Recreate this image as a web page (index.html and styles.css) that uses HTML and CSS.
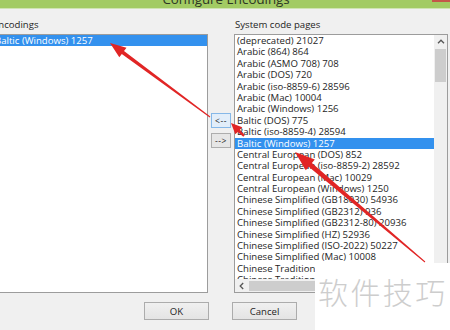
FILE: index.html
```html
<!DOCTYPE html>
<html lang="en">
<head>
  <meta charset="UTF-8" />
  <title>Configure Encodings</title>
<link rel="stylesheet" href="styles.css">
</head>
<body>
  <div class="titlebar">
    <span class="title">Configure Encodings</span>
    <span class="close"></span>
  </div>

  <div class="panes">
    <div class="label">Encodings</div>
    <div></div>
    <div class="label">System code pages</div>

    <div class="listbox">
      <div class="item sel">Baltic (Windows) 1257</div>
    </div>

    <div class="movers">
      <button class="mover hot">&lt;--</button>
      <button class="mover">--&gt;</button>
    </div>

    <div class="listbox scrolled">
      <div class="items">
        <div class="item">(deprecated) 21027</div>
        <div class="item">Arabic (864) 864</div>
        <div class="item">Arabic (ASMO 708) 708</div>
        <div class="item">Arabic (DOS) 720</div>
        <div class="item">Arabic (iso-8859-6) 28596</div>
        <div class="item">Arabic (Mac) 10004</div>
        <div class="item">Arabic (Windows) 1256</div>
        <div class="item">Baltic (DOS) 775</div>
        <div class="item">Baltic (iso-8859-4) 28594</div>
        <div class="item sel">Baltic (Windows) 1257</div>
        <div class="item">Central European (DOS) 852</div>
        <div class="item">Central European (iso-8859-2) 28592</div>
        <div class="item">Central European (Mac) 10029</div>
        <div class="item">Central European (Windows) 1250</div>
        <div class="item">Chinese Simplified (GB18030) 54936</div>
        <div class="item">Chinese Simplified (GB2312) 936</div>
        <div class="item">Chinese Simplified (GB2312-80) 20936</div>
        <div class="item">Chinese Simplified (HZ) 52936</div>
        <div class="item">Chinese Simplified (ISO-2022) 50227</div>
        <div class="item">Chinese Simplified (Mac) 10008</div>
        <div class="item">Chinese Traditional (Big5) 950</div>
        <div class="item">Chinese Traditional (CNS) 20000</div>
      </div>
      <div class="vscroll">
        <div class="arrow">
          <svg width="8" height="5" viewBox="0 0 8 5"><polyline points="1,4.2 4,1.2 7,4.2" fill="none" stroke="#555" stroke-width="1.3"/></svg>
        </div>
        <div class="thumb"></div>
      </div>
      <div class="hscroll">
        <div class="arrow">
          <svg width="5" height="8" viewBox="0 0 5 8"><polyline points="4.2,1 1.2,4 4.2,7" fill="none" stroke="#555" stroke-width="1.3"/></svg>
        </div>
        <div class="thumb"></div>
      </div>
      <div class="corner"></div>
    </div>
  </div>

  <div class="footer">
    <button class="btn">OK</button>
    <button class="btn">Cancel</button>
  </div>

  <!-- red annotation arrows drawn over the dialog -->
  <svg class="marks" width="450" height="330" viewBox="0 0 450 330">
    <polygon points="110,43 126.5,47.7 124,51.1 210.3,116.6 209.7,117.4 121.8,53.9 119.3,57.3" />
    <polygon points="231,123 242.3,127.3 239.9,129.7 244.7,135.3 243.3,136.7 237.7,131.9 235.3,134.3" />
    <polygon points="295,152 314.8,159.6 311.9,163 425.3,261.6 424.7,262.4 308.7,166.8 305.8,170.2" />
  </svg>

  <div class="watermark">软件技巧</div>
</body>
</html>
```

FILE: styles.css
```css
body {
  margin: 0;
  width: 450px;
  height: 330px;
  overflow: hidden;
  position: relative;
  background: #f0f0f0;
  font-family: "Open Sans", "Liberation Sans", sans-serif;
  font-size: 9.6px;
  color: #1e1e1e;
}

.titlebar {
  display: grid;
  grid-template-columns: 1fr 18px;
  height: 8px;
  overflow: hidden;
  background: #a2cb63;
  border-bottom: 1px solid #cfe4b2;
}

.title {
  display: block;
  text-align: center;
  padding-left: 20px;
  font-size: 13.3px;
  line-height: 13px;
  margin-top: -6.7px;
  color: #2c3524;
  white-space: nowrap;
}

.close {
  height: 2px;
  background: #c4574a;
}

.panes {
  display: grid;
  grid-template-columns: 216px 26px 214px;
  margin-left: -8px;
  padding-top: 10px;
}

.label {
  line-height: 12px;
  padding-left: 1px;
  margin-bottom: 3px;
  white-space: nowrap;
}

.listbox {
  height: 259px;
  box-sizing: border-box;
  border: 1px solid #9c9c9c;
  background: #fff;
  overflow: hidden;
}

.listbox.scrolled {
  display: grid;
  grid-template-columns: 1fr 13px;
  grid-template-rows: 1fr 13px;
}

.items {
  overflow: hidden;
  white-space: nowrap;
}

.item {
  height: 11.4px;
  line-height: 11.4px;
  padding-left: 2px;
  white-space: nowrap;
}

.item.sel {
  background: #3391ee;
  color: #fff;
}

.vscroll {
  background: #f0f0f0;
  display: flex;
  flex-direction: column;
  align-items: center;
}

.vscroll .arrow {
  height: 13px;
  width: 100%;
  display: flex;
  align-items: center;
  justify-content: center;
}

.vscroll .thumb {
  width: 11px;
  height: 33px;
  margin-top: 1px;
  background: #cdcdcd;
}

.hscroll {
  background: #f0f0f0;
  display: flex;
  align-items: center;
}

.hscroll .arrow {
  width: 13px;
  height: 100%;
  display: flex;
  align-items: center;
  justify-content: center;
}

.hscroll .thumb {
  width: 170px;
  height: 10px;
  margin-left: 1px;
  background: #cdcdcd;
}

.corner {
  background: #f0f0f0;
}

button {
  font-family: inherit;
  color: #1e1e1e;
  padding: 0;
  box-sizing: border-box;
}

.movers {
  display: flex;
  flex-direction: column;
  gap: 5px;
  padding: 79px 3px 0;
}

.mover {
  height: 15px;
  border: 1px solid #adadad;
  background: #e6e6e6;
  font-size: 8.5px;
  line-height: 13px;
  letter-spacing: 0.5px;
}

.mover.hot {
  border-color: #86b8e8;
  background: #e2eefa;
}

.footer {
  display: flex;
  gap: 23px;
  padding: 9px 0 0 144px;
}

.btn {
  width: 65px;
  height: 18px;
  border: 1px solid #acacac;
  background: linear-gradient(#f0f0f0, #e4e4e4);
  font-size: 9.6px;
}

.marks {
  position: absolute;
  left: 0;
  top: 0;
  pointer-events: none;
  fill: #e12525;
}

.watermark {
  position: absolute;
  left: 315px;
  top: 263px;
  right: 0;
  bottom: 0;
  background: #fff;
  padding: 13px 0 0 3px;
  font-family: "Noto Sans CJK SC", sans-serif;
  font-weight: 300;
  font-size: 30px;
  line-height: 30px;
  letter-spacing: 2.4px;
  color: #cdcdcd;
  white-space: nowrap;
}
```
